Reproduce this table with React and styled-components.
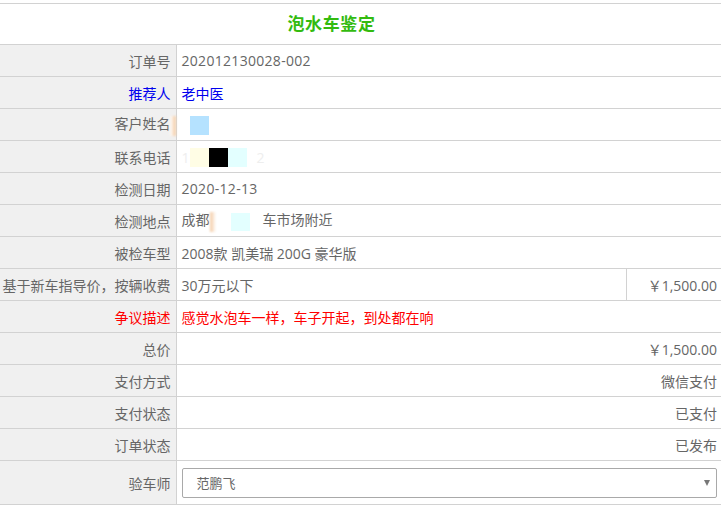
import React from "react"
import styled, { createGlobalStyle } from "styled-components"

const GlobalStyle = createGlobalStyle`
  html, body {
    margin: 0;
    padding: 0;
    background: #fff;
    overflow: hidden;
  }
  body {
    font-family: "Open Sans", "Noto Sans CJK SC", "Liberation Sans", sans-serif;
    font-size: 14px;
    color: #666;
  }
`

const Page = styled.div`
  padding-top: 3px;
  width: 721px;
`

const Table = styled.table`
  width: 721px;
  border-collapse: collapse;
  table-layout: fixed;
`

const TitleCell = styled.td`
  height: 41px;
  padding: 0 58px 4px 0;
  box-sizing: border-box;
  border-top: 1px solid #d2d2d2;
  border-bottom: 1px solid #d2d2d2;
  text-align: center;
  color: #33bb0f;
  font-family: "Noto Sans CJK SC", sans-serif;
  font-size: 17px;
  font-weight: 700;
  letter-spacing: 0.6px;
`

const Label = styled.td`
  width: 176px;
  height: ${p => (p.$tall ? 44 : 32)}px;
  padding: 0 5px 0 0;
  background: #f0f0f0;
  border-bottom: 1px solid #d2d2d2;
  border-right: 1px solid #d2d2d2;
  text-align: right;
  white-space: nowrap;
  color: ${p => p.$color || "#666"};
  box-sizing: border-box;
`

const Value = styled.td`
  padding: 0 ${p => (p.$right ? 4 : 5)}px 0 5px;
  border-bottom: 1px solid #d2d2d2;
  border-left: ${p => (p.$split ? "1px solid #d2d2d2" : "none")};
  text-align: ${p => (p.$right ? "right" : "left")};
  white-space: nowrap;
  overflow: hidden;
  color: ${p => p.$color || "#666"};
  letter-spacing: ${p => (p.$digits ? "0.3px" : "normal")};
`

const Mask = styled.span`
  display: inline-block;
  vertical-align: middle;
  width: ${p => p.$w || 19}px;
  height: ${p => p.$h || 19}px;
  background: ${p => p.$bg};
`

const Ghost = styled.span`
  display: inline-block;
  vertical-align: middle;
  color: #eee;
  width: ${p => p.$w}px;
`

const Fade = styled.span`
  display: inline-block;
  vertical-align: middle;
  width: ${p => p.$w}px;
  height: 20px;
  background: linear-gradient(90deg, #f3c9a0, #fff);
  filter: blur(1px);
`

const LabelFade = styled(Fade)`
  margin-left: -1px;
  margin-right: -5px;
  background: linear-gradient(90deg, #fff, #f3c9a0);
`

const Select = styled.div`
  height: 30px;
  border: 1px solid #a9a9a9;
  border-radius: 2px;
  display: flex;
  align-items: center;
  justify-content: space-between;
  padding: 0 6px 0 14px;
  box-sizing: border-box;
  color: #666;
  font-size: 13px;
`

const Arrow = styled.span`
  width: 0;
  height: 0;
  border-left: 3.5px solid transparent;
  border-right: 3.5px solid transparent;
  border-top: 6px solid #777;
`

const rows = [
  { label: "订单号", value: "202012130028-002", digits: true },
  { label: "推荐人", value: "老中医", color: "#0000ee" },
]

const tailRows = [
  { label: "支付方式", value: "微信支付" },
  { label: "支付状态", value: "已支付" },
  { label: "订单状态", value: "已发布" },
]

export default function App() {
  return (
    <Page>
      <GlobalStyle />
      <Table>
        <colgroup>
          <col style={{ width: 176 }} />
          <col />
          <col style={{ width: 94 }} />
        </colgroup>
        <tbody>
          <tr>
            <TitleCell colSpan={3}>泡水车鉴定</TitleCell>
          </tr>
          {rows.map(r => (
            <tr key={r.label}>
              <Label $color={r.color}>{r.label}</Label>
              <Value colSpan={2} $color={r.color} $digits={r.digits}>{r.value}</Value>
            </tr>
          ))}
          <tr>
            <Label>客户姓名<LabelFade $w={6} /></Label>
            <Value colSpan={2}>
              <Ghost $w={8} />
              <Mask $bg="#b5e2ff" />
            </Value>
          </tr>
          <tr>
            <Label>联系电话</Label>
            <Value colSpan={2}>
              <Ghost $w={8}>1</Ghost>
              <Mask $bg="#fffde5" />
              <Mask $bg="#000" />
              <Mask $bg="#e3ffff" />
              <Ghost $w={10} />
              <Ghost $w={10}>2</Ghost>
            </Value>
          </tr>
          <tr>
            <Label>检测日期</Label>
            <Value colSpan={2} $digits>2020-12-13</Value>
          </tr>
          <tr>
            <Label>检测地点</Label>
            <Value colSpan={2}>
              成都<Fade $w={6} />
              <Ghost $w={15} />
              <Mask $bg="#e3ffff" $h={18} />
              <Ghost $w={13} />车市场附近
            </Value>
          </tr>
          <tr>
            <Label>被检车型</Label>
            <Value colSpan={2}>2008款 凯美瑞 200G 豪华版</Value>
          </tr>
          <tr>
            <Label>基于新车指导价，按辆收费</Label>
            <Value>30万元以下</Value>
            <Value $right $split>￥1,500.00</Value>
          </tr>
          <tr>
            <Label $color="#ff0000">争议描述</Label>
            <Value colSpan={2} $color="#ff0000">感觉水泡车一样，车子开起，到处都在响</Value>
          </tr>
          <tr>
            <Label>总价</Label>
            <Value colSpan={2} $right>￥1,500.00</Value>
          </tr>
          {tailRows.map(r => (
            <tr key={r.label}>
              <Label>{r.label}</Label>
              <Value colSpan={2} $right>{r.value}</Value>
            </tr>
          ))}
          <tr>
            <Label $tall>验车师</Label>
            <Value colSpan={2} $right>
              <Select>
                <span>范鹏飞</span>
                <Arrow />
              </Select>
            </Value>
          </tr>
        </tbody>
      </Table>
    </Page>
  )
}
